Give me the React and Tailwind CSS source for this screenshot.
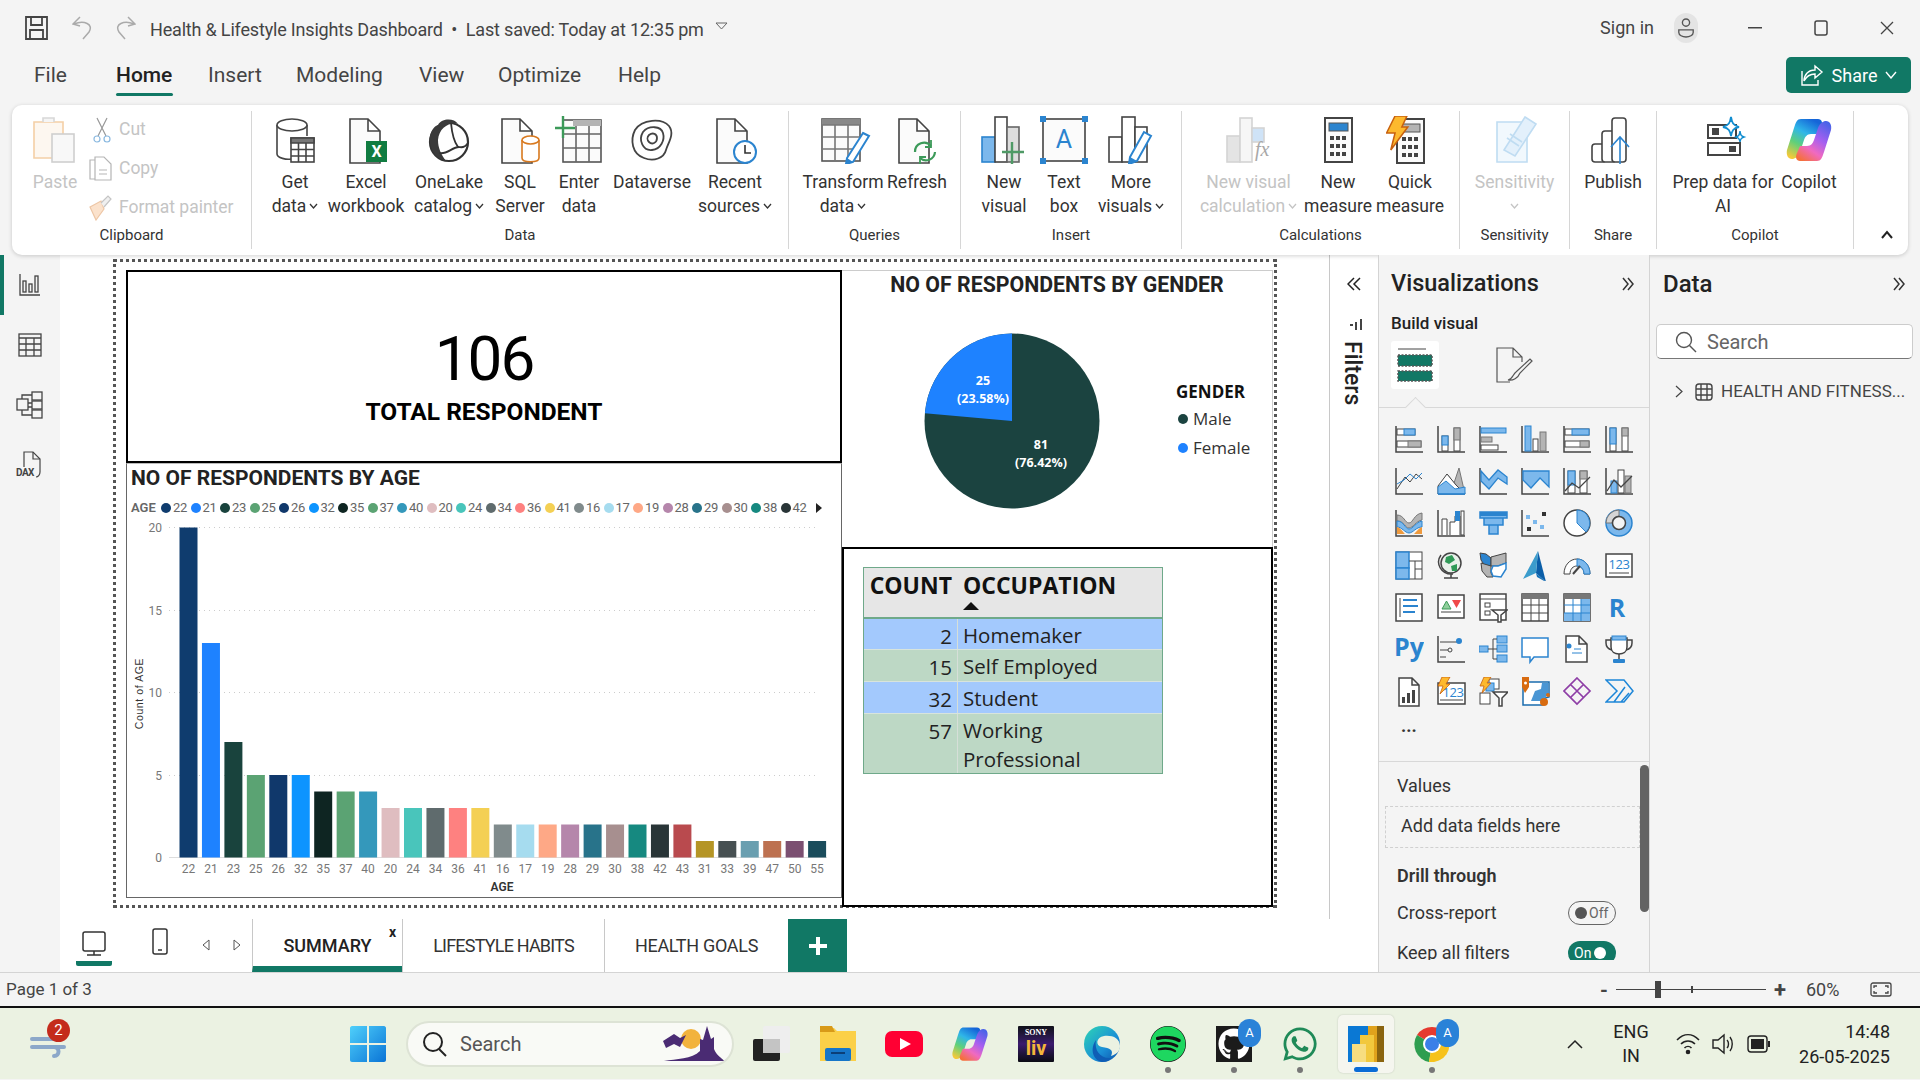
import { FaGithub, FaWhatsapp, FaSpotify } from 'react-icons/fa';

const D = '#444444';
const B = '#2b84cf';
const L = '#7cb8ec';
const G = '#b4b4b4';

const bars = [
  ['22', 20, '#0f3c6e'], ['21', 13, '#1e82ff'], ['23', 7, '#19433d'], ['25', 5, '#5ba373'], ['26', 5, '#10386b'],
  ['32', 5, '#0d94ff'], ['35', 4, '#0e2522'], ['37', 4, '#5ba373'], ['40', 4, '#3498bb'], ['20', 3, '#dfbdc0'],
  ['24', 3, '#49c5bb'], ['34', 3, '#5f6b6d'], ['36', 3, '#fe8180'], ['41', 3, '#f4d054'], ['16', 2, '#808b8c'],
  ['17', 2, '#a6dcef'], ['19', 2, '#fea886'], ['28', 2, '#b586ab'], ['29', 2, '#28738a'], ['30', 2, '#a78f8f'],
  ['38', 2, '#168980'], ['42', 2, '#293537'], ['43', 2, '#b94a4e'], ['31', 1, '#b59525'], ['33', 1, '#475052'],
  ['39', 1, '#6a9fb0'], ['47', 1, '#bd7150'], ['50', 1, '#7b4f71'], ['55', 1, '#1b4d5c'],
];

// ribbon icons are all drawn on a 48 box
function RI({ children, w = 48, h = 48 }) {
  return (
    <svg width={w} height={h} viewBox={`0 0 ${w} ${h}`} fill="none" stroke={D} strokeWidth="1.6">
      {children}
    </svg>
  );
}

const Doc = ({ x = 8, w = 28, h = 44, c = D }) => (
  <path d={`M${x} 3H${x + w - 12}L${x + w} 15V${3 + h}H${x}Z M${x + w - 12} 3V15H${x + w}`} stroke={c} fill="#fbfbfb" />
);

const PasteIcon = () => (
  <RI>
    <path d="M3 6H32V42H3Z" stroke="#f4cfa6" fill="#fdf7f0" />
    <path d="M12 6V2H23V6" stroke="#d8d8d8" fill="#f5f5f5" />
    <rect x="21" y="18" width="22" height="28" stroke="#cfcfcf" fill="#f8f8f8" />
  </RI>
);
const GetDataIcon = () => (
  <RI>
    <path d="M6 9V38C6 42 16 44 20 43M36 9V20" />
    <ellipse cx="21" cy="9" rx="15" ry="6" fill="#fff" />
    <rect x="20" y="22" width="23" height="24" fill="#fff" />
    <path d="M20 27H43V22H20Z" fill="#777" />
    <path d="M20 33.5H43M20 40H43M27.5 27V46M35 27V46" />
  </RI>
);
const ExcelIcon = () => (
  <RI>
    <Doc x={8} w={30} />
    <rect x="24" y="25" width="21" height="21" fill="#107c41" stroke="none" />
    <text x="34.5" y="41" textAnchor="middle" fill="#fff" stroke="none" fontSize="16" fontWeight="700">X</text>
  </RI>
);
const OneLakeIcon = () => (
  <RI>
    <circle cx="24" cy="26" r="19" fill="#fff" strokeWidth="2.2" stroke="#333" />
    <path d="M6 31C2 18 9 10 13 9C17 2 29 2 33 8C24 6 14 12 13 24C13 32 16 38 21 45C13 43 8 38 6 31Z" fill="#3a3a3a" stroke="none" />
    <path d="M26 7C27 18 30 27 33 31M14 37C22 39 27 31 34 31C38 32 41 30 43 27" stroke="#333" strokeWidth="1.800" />
  </RI>
);
const SqlIcon = () => (
  <RI>
    <Doc x={6} w={30} />
    <path d="M26 24V42C26 47 43 47 43 42V24" stroke="#d8791f" fill="#fff" />
    <ellipse cx="34.5" cy="24" rx="8.5" ry="4" stroke="#d8791f" fill="#fff" />
  </RI>
);
const EnterIcon = () => (
  <RI>
    <rect x="8" y="4" width="38" height="42" fill="#fbfbfb" stroke="#555" />
    <rect x="18" y="4" width="28" height="6" fill={G} stroke="none" />
    <path d="M8 18H46M8 32H46M21 10V46M34 10V46" stroke="#666" />
    <path d="M8 0V22M0 12H20" stroke="#3c9a59" strokeWidth="2.4" />
  </RI>
);
const DataverseIcon = () => (
  <RI>
    <path d="M7 14C14 3 34 2 41 10C47 18 40 27 38 34C36 42 26 46 16 42C4 38 2 24 7 14Z" fill="#fff" strokeWidth="1.8" />
    <path d="M15 16C21 9 33 10 35 17C37 24 33 33 24 34C15 35 10 24 15 16Z" strokeWidth="1.8" />
    <path d="M21 19C25 16 29 18 29 22C29 27 24 29 21 26C19 24 19 21 21 19Z" strokeWidth="1.8" />
  </RI>
);
const RecentIcon = () => (
  <RI>
    <Doc x={6} w={30} />
    <circle cx="34" cy="36" r="11" fill="#fff" stroke={B} strokeWidth="2" />
    <path d="M34 29V37H40" stroke="#333" />
  </RI>
);
const TransformIcon = () => (
  <RI w={62} h={48}>
    <g transform="translate(10 0)">
      <rect x="0" y="3" width="38" height="42" fill="#fbfbfb" stroke="#555" />
      <rect x="0" y="3" width="38" height="6" fill="#888" stroke="none" />
      <path d="M0 9H38M0 21H38M0 33H38M13 9V45M26 9V45" stroke="#777" />
      <path d="M41 17L47 20L31 46L24 48L25 42Z" fill="#fff" stroke={B} strokeWidth="2" />
      <path d="M25 42L31 46L24 48Z" fill={B} stroke="none" />
    </g>
  </RI>
);
const RefreshIcon = () => (
  <RI>
    <Doc x={6} w={30} />
    <path d="M22 36A9 9 0 0 1 38 30M42 36A9 9 0 0 1 27 42" stroke="#3c9a59" strokeWidth="2.2" fill="none" />
    <path d="M38 24V31H32M27 48V41H33" stroke="#3c9a59" strokeWidth="1.8" />
  </RI>
);
const NewVisualIcon = () => (
  <RI>
    <rect x="2" y="21" width="13" height="25" fill={L} stroke={B} />
    <rect x="15" y="1" width="12" height="45" fill="#fff" />
    <rect x="27" y="11" width="12" height="35" fill="#ddd" stroke="#666" />
    <path d="M32 26V48M22 36H44" stroke="#4f9a66" strokeWidth="2.4" />
  </RI>
);
const TextBoxIcon = () => (
  <RI>
    <rect x="3" y="3" width="42" height="42" fill="#fbfbfb" stroke="#444" />
    <text x="24" y="32" textAnchor="middle" fontSize="25" stroke="none" fill={B}>A</text>
    <g fill={B} stroke="none">
      <rect x="0" y="0" width="6" height="6" />
      <rect x="42" y="0" width="6" height="6" />
      <rect x="0" y="42" width="6" height="6" />
      <rect x="42" y="42" width="6" height="6" />
    </g>
  </RI>
);
const MoreVisualsIcon = () => (
  <RI>
    <rect x="2" y="21" width="13" height="25" fill="#fff" />
    <rect x="15" y="1" width="13" height="45" fill="#fff" />
    <rect x="28" y="11" width="12" height="35" fill="#fff" />
    <path d="M37 16L44 20L30 45L22 48L23 41Z" fill="#fff" stroke={B} strokeWidth="2" />
    <path d="M23 41L30 45L22 48Z" fill={B} stroke="none" />
  </RI>
);
const NewCalcIcon = () => (
  <RI>
    <rect x="2" y="20" width="13" height="26" fill="#e4e4e4" stroke="#d4d4d4" />
    <rect x="15" y="2" width="12" height="44" fill="#f6f6f6" stroke="#d4d4d4" />
    <rect x="27" y="12" width="12" height="14" fill="#cfe3f7" stroke="#d4d4d4" />
    <text x="30" y="40" fontSize="20" fontStyle="italic" fontFamily="Liberation Serif" stroke="none" fill="#a8a8a8">fx</text>
  </RI>
);
const Calc = ({ c = B }) => (
  <g>
    <rect x="11" y="2" width="27" height="44" fill="#fbfbfb" strokeWidth="2" stroke="#444" />
    <rect x="15" y="7" width="19" height="8" fill={c} stroke="#555" strokeWidth="1" />
    <g fill="#444" stroke="none">
      {[20, 28, 36].map((y) => [16, 22, 28].map((x) => <rect key={`${x}${y}`} x={x} y={y} width="4" height="4" />))}
    </g>
  </g>
);
const QuickIcon = () => (
  <RI>
    <g transform="translate(0 1)"><Calc c={G} /></g>
    <path d="M13 0H27L21 13H28L8 40L13 20H3Z" fill="#fdb92e" stroke="#c8610f" strokeWidth="1.8" transform="translate(-2 0) scale(.85)" />
  </RI>
);
const SensitivityIcon = () => (
  <RI>
    <path d="M6 6H36V46H6Z" stroke="#bfdcf2" fill="#f1f8fd" />
    <path d="M34 1L45 8L24 40L13 34Z" stroke="#bfdcf2" fill="#e3f0fb" />
    <path d="M16 22L28 30M19 18L31 26" stroke="#bfdcf2" />
  </RI>
);
const PublishIcon = () => (
  <RI>
    <rect x="3" y="28" width="14" height="18" rx="3" fill="#fff" />
    <rect x="13" y="15" width="14" height="31" rx="3" fill="#fff" />
    <rect x="23" y="2" width="14" height="44" rx="3" fill="#fff" />
    <path d="M31 48V22M22 31L31 21L40 31" stroke={B} strokeWidth="1.6" />
  </RI>
);
const PrepIcon = () => (
  <RI>
    <rect x="9" y="9" width="28" height="13" fill="#fff" stroke="#444" strokeWidth="2" />
    <rect x="13" y="12" width="7" height="7" fill="#444" stroke="none" />
    <rect x="9" y="27" width="32" height="12" fill="#fff" stroke="#444" strokeWidth="2" />
    <rect x="30" y="30" width="7" height="6" fill="#444" stroke="none" />
    <path d="M32 1C33 7 34 9 40 11C34 12 33 15 32 20C31 15 30 12 24 11C30 9 31 7 32 1Z" fill="#fff" stroke="#118dd0" strokeWidth="1.800" />
    <path d="M41 15C41.500 19 42 20 45 21C42 22 41.500 23 41 26C40.500 23 40 22 37 21C40 20 40.500 19 41 15Z" fill="#fff" stroke="#118dd0" strokeWidth="1.500" />
  </RI>
);
const CopilotLogo = ({ id, size = 48 }) => (
  <svg width={size} height={size} viewBox="0 0 48 48">
    <defs>
      <linearGradient id={`${id}a`} x1=".7" y1="0" x2=".2" y2="1">
        <stop offset="0" stopColor="#1565d8" />
        <stop offset=".35" stopColor="#2fb6e8" />
        <stop offset=".65" stopColor="#5fd07a" />
        <stop offset="1" stopColor="#f5c93a" />
      </linearGradient>
      <linearGradient id={`${id}b`} x1=".8" y1="0" x2=".2" y2="1">
        <stop offset="0" stopColor="#4a63e8" />
        <stop offset=".4" stopColor="#a65ff0" />
        <stop offset=".7" stopColor="#f06ac0" />
        <stop offset="1" stopColor="#f5703c" />
      </linearGradient>
    </defs>
    <path d="M16 3H33C37 3 38 7 36 11L33 18H26C22 18 20 21 19 24L15 36C13 41 10 43 7 43C3 43 1 39 2 34L9 12C11 6 12 3 16 3Z" fill={`url(#${id}a)`} />
    <path d="M32 45H15C11 45 10 41 12 37L15 30H22C26 30 28 27 29 24L33 12C35 7 38 5 41 5C45 5 47 9 46 14L39 36C37 42 36 45 32 45Z" fill={`url(#${id}b)`} />
  </svg>
);

function RibbonBtn({ icon, lines, w, caret, disabled }) {
  const c = disabled ? 'text-[#c4c4c4]' : 'text-[#333]';
  return (
    <div className={`flex flex-col items-center shrink-0 ${c}`} style={{ width: w }}>
      <div className="h-[58px] flex items-center justify-center">{icon}</div>
      <div className="whitespace-nowrap text-[17.5px] leading-[24px] mt-[1px]">{lines[0]}</div>
      <div className="whitespace-nowrap text-[17.5px] leading-[24px] flex items-center gap-[3px] h-[24px]">
        {lines[1]}
        {caret && (
          <svg width="9" height="6" viewBox="0 0 9 6" fill="none" stroke="currentColor" strokeWidth="1.3"><path d="M1 1L4.500 5L8 1" /></svg>
        )}
      </div>
    </div>
  );
}

function RibbonGroup({ label, w, children, last }) {
  return (
    <div className={`flex flex-col h-[138px] shrink-0 ${last ? '' : 'border-r border-[#d6d6d6]'}`} style={{ width: w }}>
      <div className="flex-1 flex justify-center">{children}</div>
      <div className="h-[24px] text-center text-[15px] text-[#333] leading-[20px]">{label}</div>
    </div>
  );
}

function Ribbon() {
  return (
    <div className="mx-[12px] w-[1896px] h-[150px] bg-white rounded-[10px] shadow-[0_1px_4px_rgba(0,0,0,0.18)] flex items-start pt-[6px] relative shrink-0">
      <RibbonGroup label="Clipboard" w={240}>
        <div className="flex w-full pl-[14px]">
          <RibbonBtn w={58} icon={<PasteIcon />} lines={['Paste', '']} disabled />
          <div className="flex flex-col text-[17.5px] text-[#c4c4c4] ml-[5px] gap-[14px]">
            <div className="flex items-center h-[25px] mt-[6px]">
              <span className="w-[30px] pl-[4px] flex">
                <svg width="18" height="26" viewBox="0 0 18 26" fill="none" stroke="#999" strokeWidth="1.200"><path d="M4 1L13 19M14 1L5 19" /><circle cx="4" cy="22" r="3" stroke="#8ab9e0" /><circle cx="14" cy="22" r="3" stroke="#8ab9e0" /></svg>
              </span>
              Cut
            </div>
            <div className="flex items-center h-[25px]">
              <span className="w-[30px] flex">
                <svg width="24" height="26" viewBox="0 0 24 26" fill="none" stroke="#b5b5b5" strokeWidth="1.200"><path d="M1 4H10V23H1Z" /><path d="M6 1H15L22 8V24H6Z" fill="#fff" /><path d="M10 14H18M10 18H18" /></svg>
              </span>
              Copy
            </div>
            <div className="flex items-center h-[25px]">
              <span className="w-[30px] flex">
                <svg width="24" height="26" viewBox="0 0 24 26" fill="none" stroke="#c5c5c5" strokeWidth="1.200"><path d="M1 12L12 6L15 14L7 25Z" fill="#fbe2cc" stroke="#edc6a5" /><path d="M12 8L19 1L22 4L15 12" fill="#f0f0f0" /></svg>
              </span>
              Format painter
            </div>
          </div>
        </div>
      </RibbonGroup>
      <RibbonGroup label="Data" w={537}>
        <div className="flex w-full pl-[10px]">
          <RibbonBtn w={66} icon={<GetDataIcon />} lines={['Get', 'data']} caret />
          <RibbonBtn w={76} icon={<ExcelIcon />} lines={['Excel', 'workbook']} />
          <RibbonBtn w={90} icon={<OneLakeIcon />} lines={['OneLake', 'catalog']} caret />
          <RibbonBtn w={52} icon={<SqlIcon />} lines={['SQL', 'Server']} />
          <RibbonBtn w={66} icon={<EnterIcon />} lines={['Enter', 'data']} />
          <RibbonBtn w={80} icon={<DataverseIcon />} lines={['Dataverse', '']} />
          <RibbonBtn w={86} icon={<RecentIcon />} lines={['Recent', 'sources']} caret />
        </div>
      </RibbonGroup>
      <RibbonGroup label="Queries" w={172}>
        <div className="flex w-full pl-[14px]">
          <RibbonBtn w={80} icon={<TransformIcon />} lines={['Transform', 'data']} caret />
          <RibbonBtn w={68} icon={<RefreshIcon />} lines={['Refresh', '']} />
        </div>
      </RibbonGroup>
      <RibbonGroup label="Insert" w={221}>
        <div className="flex w-full pl-[13px]">
          <RibbonBtn w={60} icon={<NewVisualIcon />} lines={['New', 'visual']} />
          <RibbonBtn w={60} icon={<TextBoxIcon />} lines={['Text', 'box']} />
          <RibbonBtn w={74} icon={<MoreVisualsIcon />} lines={['More', 'visuals']} caret />
        </div>
      </RibbonGroup>
      <RibbonGroup label="Calculations" w={278}>
        <div className="flex w-full pl-[13px]">
          <RibbonBtn w={107} icon={<NewCalcIcon />} lines={['New visual', 'calculation']} caret disabled />
          <RibbonBtn w={72} icon={<RI><Calc /></RI>} lines={['New', 'measure']} />
          <RibbonBtn w={72} icon={<QuickIcon />} lines={['Quick', 'measure']} />
        </div>
      </RibbonGroup>
      <RibbonGroup label="Sensitivity" w={110}>
        <RibbonBtn w={100} icon={<SensitivityIcon />} lines={['Sensitivity', '']} caret disabled />
      </RibbonGroup>
      <RibbonGroup label="Share" w={87}>
        <RibbonBtn w={80} icon={<PublishIcon />} lines={['Publish', '']} />
      </RibbonGroup>
      <RibbonGroup label="Copilot" w={197}>
        <div className="flex w-full pl-[12px]">
          <RibbonBtn w={108} icon={<PrepIcon />} lines={['Prep data for', 'AI']} />
          <RibbonBtn w={64} icon={<CopilotLogo id="rc" />} lines={['Copilot', '']} />
        </div>
      </RibbonGroup>
      <svg className="absolute right-[14px] bottom-[16px]" width="14" height="9" viewBox="0 0 14 9" fill="none" stroke="#222" strokeWidth="2"><path d="M2 8L7 2L12 8" /></svg>
    </div>
  );
}

function TitleBar() {
  return (
    <div className="h-[55px] flex items-center shrink-0 text-[#444]">
      <svg className="ml-[25px]" width="23" height="24" viewBox="0 0 23 24" fill="none" stroke="#444" strokeWidth="1.800"><path d="M1 1H22V23H1Z" /><path d="M6 1V9H17V1M5 23V14H18V23" /></svg>
      <svg className="ml-[24px]" width="22" height="24" viewBox="0 0 22 24" fill="none" stroke="#aaa" strokeWidth="1.500"><path d="M8 1L1 8L8 10M2 8C12 4 22 8 17 16L11 23" /></svg>
      <svg className="ml-[20px]" width="22" height="24" viewBox="0 0 22 24" fill="none" stroke="#aaa" strokeWidth="1.500"><path d="M14 1L21 8L14 10M20 8C10 4 0 8 5 16L11 23" /></svg>
      <div className="ml-[14px] text-[18px] tracking-[-0.18px] whitespace-nowrap w-[554px] pt-[3px]">Health &amp; Lifestyle Insights Dashboard&nbsp; •&nbsp; Last saved: Today at 12:35 pm</div>
      <svg className="ml-[11px] mb-[4px]" width="13" height="8" viewBox="0 0 13 8" fill="none" stroke="#666"><path d="M1 1H12L6.500 7Z" /></svg>
      <div className="ml-auto text-[18px]">Sign in</div>
      <div className="ml-[20px] w-[24px] h-[30px] rounded-full bg-[#e4e4e4] flex items-center justify-center">
        <svg width="18" height="24" viewBox="0 0 20 24" fill="none" stroke="#555" strokeWidth="1.500"><circle cx="10" cy="6" r="4" /><path d="M2 14H18V17C18 20 14 22 10 22C6 22 2 20 2 17Z" /></svg>
      </div>
      <svg className="ml-[50px]" width="14" height="2" viewBox="0 0 14 2"><rect width="14" height="1.500" fill="#444" /></svg>
      <svg className="ml-[52px]" width="14" height="16" viewBox="0 0 14 16" fill="none" stroke="#444" strokeWidth="1.500"><rect x="1" y="1" width="12" height="14" rx="2" /></svg>
      <svg className="ml-[52px] mr-[26px]" width="14" height="14" viewBox="0 0 14 14" fill="none" stroke="#444" strokeWidth="1.300"><path d="M1 1L13 13M13 1L1 13" /></svg>
    </div>
  );
}

function MenuRow() {
  return (
    <div className="h-[50px] flex items-start shrink-0 text-[21px] text-[#444]">
      <div className="ml-[34px] w-[82px] leading-[40px]">File</div>
      <div className="w-[92px] relative font-medium text-[#222] leading-[40px]">
        Home
        <div className="absolute left-0 top-[38px] w-[57px] h-[3px] bg-[#117865] rounded-full" />
      </div>
      <div className="w-[88px] leading-[40px]">Insert</div>
      <div className="w-[123px] leading-[40px]">Modeling</div>
      <div className="w-[79px] leading-[40px]">View</div>
      <div className="w-[120px] leading-[40px]">Optimize</div>
      <div className="leading-[40px]">Help</div>
      <div className="ml-auto mr-[9px] w-[125px] h-[36px] mt-[2px] rounded-[5px] bg-[#117865] text-white text-[18px] flex items-center justify-center gap-[8px]">
        <svg width="24" height="24" viewBox="0 0 24 24" fill="none" stroke="#fff" strokeWidth="1.400"><path d="M15 3L22 9L15 15V11C9 11 6 14 4 18C4 12 8 7 15 7Z" /><path d="M2 8V22H18V17" /></svg>
        Share
        <svg width="12" height="8" viewBox="0 0 12 8" fill="none" stroke="#fff" strokeWidth="1.400"><path d="M1 1L6 7L11 1" /></svg>
      </div>
    </div>
  );
}

function Rail() {
  return (
    <div className="w-[60px] shrink-0 bg-[#f4f4f4] flex flex-col">
      <div className="h-[60px] flex items-center justify-center relative">
        <div className="absolute left-0 top-0 w-[4px] h-[60px] bg-[#117865]" />
        <svg width="22" height="22" viewBox="0 0 22 22" fill="none" stroke="#444" strokeWidth="1.300"><path d="M1 0V21H21" /><rect x="4" y="7" width="3" height="11" /><rect x="10" y="10" width="3" height="8" /><rect x="16" y="2" width="3" height="16" /></svg>
      </div>
      <div className="h-[60px] flex items-center justify-center">
        <svg width="24" height="24" viewBox="0 0 24 24" fill="none" stroke="#444" strokeWidth="1.300"><rect x="1" y="1" width="22" height="22" /><path d="M1 5H23M1 11H23M1 17H23M8 5V23M16 5V23" /></svg>
      </div>
      <div className="h-[60px] flex items-center justify-center">
        <svg width="28" height="28" viewBox="0 0 28 28" fill="none" stroke="#444" strokeWidth="1.300"><rect x="1" y="8" width="11" height="11" /><rect x="16" y="1" width="10" height="8" /><rect x="16" y="10" width="10" height="8" /><rect x="16" y="19" width="10" height="8" /><path d="M12 12H16M12 16H16M6 8V4H16M6 19V24H16" /></svg>
      </div>
      <div className="h-[60px] flex items-center justify-center">
        <div className="relative w-[28px] h-[28px]">
          <svg width="28" height="28" viewBox="0 0 28 28" fill="none" stroke="#444" strokeWidth="1.200"><path d="M8 16V1H17L24 8V21C24 24 22 26 20 26" /><path d="M17 1V8H24" /></svg>
          <span className="absolute left-0 bottom-[0px] text-[10px] font-bold leading-[12px] text-[#444] tracking-[-0.5px]">DAX</span>
        </div>
      </div>
    </div>
  );
}

function AgeChart() {
  const ys = [[20, 65], [15, 148], [10, 230], [5, 313], [0, 395]];
  return (
    <div className="h-[435px] w-[716px] border-[1.5px] border-[#666] border-t-[#bbb] bg-white">
      <div className="pl-[4px] text-[21px] font-bold text-[#222] leading-[28px] whitespace-nowrap">NO OF RESPONDENTS BY AGE</div>
      <div className="pl-[4px] mt-[2px] h-[28px] flex items-center text-[13px] text-[#666]">
        <span className="w-[30px] font-semibold">AGE</span>
        {bars.slice(0, 22).map((b, i) => (
          <span key={i} className="w-[29.5px] flex items-center gap-[2px] shrink-0 tracking-[-0.3px]">
            <span className="w-[10px] h-[10px] rounded-full shrink-0" style={{ background: b[2] }} />
            {b[0]}
          </span>
        ))}
        <svg className="ml-[6px]" width="6" height="10" viewBox="0 0 6 10"><path d="M0 0L6 5L0 10Z" fill="#222" /></svg>
      </div>
      <svg width="713" height="372" viewBox="0 59.500 713 372" className="block">
        {ys.map(([v, y]) => (
          <g key={v}>
            <text x="35" y={y + 4} textAnchor="end" fontSize="12" fill="#777">{v}</text>
            {v > 0 && <line x1="42" x2="690" y1={y} y2={y} stroke="#ccc" strokeDasharray="1 4" />}
          </g>
        ))}
        <line x1="42" x2="700" y1="395" y2="395" stroke="#ddd" />
        {bars.map(([age, n, c], i) => {
          const x = 52.5 + i * 22.45;
          const h = n * 16.5;
          return (
            <g key={age}>
              <rect x={x} y={395 - h} width="18" height={h} fill={c} />
              <text x={x + 9} y="410" textAnchor="middle" fontSize="12" fill="#777">{age}</text>
            </g>
          );
        })}
        <text x="375" y="428" textAnchor="middle" fontSize="12" fontWeight="600" fill="#333">AGE</text>
        <text transform="translate(16 231) rotate(-90)" textAnchor="middle" fontSize="10.500" letterSpacing=".6" fontFamily="Liberation Sans" fill="#333">Count of AGE</text>
      </svg>
    </div>
  );
}

function GenderVisual() {
  return (
    <div className="h-[277px] w-[431px] border-t border-r border-[#ccc] bg-white">
      <div className="text-center text-[21.3px] font-bold text-[#222] leading-[28px] whitespace-nowrap">NO OF RESPONDENTS BY GENDER</div>
      <div className="flex mt-[34px]">
        <svg className="ml-[82px]" width="176" height="176" viewBox="0 0 176 176">
          <circle cx="88" cy="88" r="87.500" fill="#1b4340" />
          <path d="M88 88V0.500A87.500 87.500 0 0 0 0.900 80.200Z" fill="#1e82ff" />
          <g fill="#fff" fontSize="12.500" fontWeight="700" textAnchor="middle" fontFamily="Open Sans">
            <text x="59" y="52">25</text>
            <text x="59" y="70">(23.58%)</text>
            <text x="117" y="116">81</text>
            <text x="117" y="134">(76.42%)</text>
          </g>
        </svg>
        <div className="ml-[76px] mt-[47px] font-['Open_Sans',sans-serif]">
          <div className="text-[17px] font-bold text-[#111] leading-[24px]">GENDER</div>
          <div className="flex items-center gap-[5px] text-[17px] text-[#333] leading-[29px] pl-[2px]"><span className="w-[10px] h-[10px] rounded-full bg-[#1b4340]" />Male</div>
          <div className="flex items-center gap-[5px] text-[17px] text-[#333] leading-[29px] pl-[2px]"><span className="w-[10px] h-[10px] rounded-full bg-[#1e82ff]" />Female</div>
        </div>
      </div>
    </div>
  );
}

function OccupationTable() {
  const rows = [
    ['2', 'Homemaker', 'bg-[#a3c9fd]', 'h-[31px]'],
    ['15', 'Self Employed', 'bg-[#bdd8c5]', 'h-[32px]'],
    ['32', 'Student', 'bg-[#a3c9fd]', 'h-[32px]'],
    ['57', 'Working Professional', 'bg-[#bdd8c5]', 'h-[59px]'],
  ];
  return (
    <div className="h-[360px] w-[431px] border-2 border-black bg-white pt-[18px] pl-[19px] font-['Open_Sans',sans-serif]">
      <div className="w-[300px] border border-[#6fa98a] text-[20.5px] text-[#222]">
        <div className="flex h-[51px] bg-[#e6e6e6] border-b-2 border-[#6fa98a] font-bold text-[#111] text-[23px]">
          <div className="w-[94px] pr-[6px] text-right leading-[34px] whitespace-nowrap">COUNT</div>
          <div className="flex-1 pl-[5px] leading-[34px] relative">
            OCCUPATION
            <svg className="absolute left-[5px] top-[34px]" width="16" height="8" viewBox="0 0 16 8"><path d="M0 8L8 0L16 8Z" fill="#111" /></svg>
          </div>
        </div>
        {rows.map(([n, name, bg, h]) => (
          <div key={n} className={`flex ${bg} ${h} border-b border-[#d8e4dc] last:border-b-0`}>
            <div className="w-[94px] pr-[5px] text-right leading-[30px] pt-[2px] border-r border-[#d6dfd8]">{n}</div>
            <div className="flex-1 pl-[5px] leading-[29px] pt-[2px]"><div className="w-[170px]">{name}</div></div>
          </div>
        ))}
      </div>
    </div>
  );
}

function Canvas() {
  return (
    <div className="flex-1 bg-white pl-[53px] pt-[4px]">
      <div className="w-[1164px] h-[649px] border-[3px] border-dotted border-[#555] pl-[10px] pt-[8px] flex">
        <div className="w-[716px]">
          <div className="h-[193px] border-2 border-black flex flex-col items-center">
            <div className="mt-[52px] text-[62px] leading-[70px] tracking-[-2px] text-black">106</div>
            <div className="mt-[2px] text-[24.5px] font-bold leading-[32px] text-black">TOTAL RESPONDENT</div>
          </div>
          <AgeChart />
        </div>
        <div>
          <GenderVisual />
          <OccupationTable />
        </div>
      </div>
    </div>
  );
}

function FiltersPane() {
  return (
    <div className="w-[49px] bg-white border-l border-[#c8c8c8] flex flex-col items-center pt-[22px] shrink-0">
      <svg width="14" height="14" viewBox="0 0 14 14" fill="none" stroke="#222" strokeWidth="1.500"><path d="M7 1L1 7L7 13M13 1L7 7L13 13" /></svg>
      <svg className="mt-[28px] ml-[4px]" width="12" height="12" viewBox="0 0 12 12" fill="#444"><rect x="0" y="5" width="3" height="2" /><rect x="5" y="3" width="2" height="8" /><rect x="10" y="0" width="2" height="11" /></svg>
      <div className="mt-[10px] mr-[4px] [writing-mode:vertical-rl] text-[23px] font-medium text-[#222] leading-[26px]">Filters</div>
    </div>
  );
}

function TabsBar() {
  return (
    <div className="h-[53px] bg-white flex shrink-0 relative">
      <div className="ml-[16px] w-[36px] h-[47px] flex flex-col items-center pt-[12px] border-b-[5px] border-[#117865] rounded-b-[2px]">
        <svg width="24" height="26" viewBox="0 0 24 26" fill="none" stroke="#333" strokeWidth="1.500"><rect x="1" y="1" width="22" height="19" rx="2" /><path d="M12 20V24M5 24H19" /></svg>
      </div>
      <div className="ml-[40px] pt-[9px]">
        <svg width="16" height="27" viewBox="0 0 16 27" fill="none" stroke="#333" strokeWidth="1.500"><rect x="1" y="1" width="14" height="25" rx="2" /><path d="M6 22H10" /></svg>
      </div>
      <div className="ml-[34px] pt-[20px]">
        <svg width="8" height="12" viewBox="0 0 8 12" fill="none" stroke="#555"><path d="M7 1L1 6L7 11Z" /></svg>
      </div>
      <div className="ml-[23px] pt-[20px]">
        <svg width="8" height="12" viewBox="0 0 8 12" fill="none" stroke="#555"><path d="M1 1L7 6L1 11Z" /></svg>
      </div>
      <div className="ml-[11px] w-[150px] border-l border-[#c8c8c8] border-b-[6px] border-b-[#117865] flex items-center justify-center text-[18px] font-medium text-[#222] relative pt-[5px]">
        SUMMARY
        <span className="absolute right-[6px] top-[5px] text-[14px] font-bold leading-[16px]">x</span>
      </div>
      <div className="w-[202px] border-l border-[#c8c8c8] flex items-center justify-center text-[18px] tracking-[-0.8px] text-[#333]">LIFESTYLE HABITS</div>
      <div className="w-[184px] border-l border-[#c8c8c8] flex items-center justify-center text-[18px] tracking-[-0.3px] text-[#333]">HEALTH GOALS</div>
      <div className="w-[59px] bg-[#117865] flex items-center justify-center">
        <svg width="18" height="18" viewBox="0 0 18 18" stroke="#fff" strokeWidth="4"><path d="M9 0V18M0 9H18" /></svg>
      </div>
    </div>
  );
}

// axes shared by most of the visual type icons
const Ax = () => <path d="M1 1V27H28" stroke={D} strokeWidth="1.500" fill="none" />;

const vizIcons = [
  <><Ax /><rect x="2" y="4" width="18" height="6" fill="#fff" stroke={D} /><rect x="9" y="4" width="11" height="6" fill={L} stroke={B} /><rect x="2" y="16" width="24" height="6" fill="#fff" stroke={D} /><rect x="13" y="16" width="13" height="6" fill={G} stroke="#777" /></>,
  <><Ax /><rect x="5" y="11" width="6" height="15" fill="#fff" stroke={D} /><rect x="5" y="11" width="6" height="9" fill={L} stroke={B} /><rect x="17" y="3" width="6" height="23" fill="#fff" stroke={D} /><rect x="17" y="3" width="6" height="12" fill={G} stroke="#777" /></>,
  <><Ax /><rect x="2" y="3" width="25" height="5" fill={L} stroke={B} /><rect x="2" y="12" width="11" height="5" fill={G} stroke="#777" /><rect x="2" y="20" width="17" height="5" fill="#fff" stroke={D} /></>,
  <><Ax /><rect x="4" y="1" width="6" height="25" fill={L} stroke={B} /><rect x="12" y="14" width="5" height="12" fill="#fff" stroke={D} /><rect x="19" y="7" width="6" height="19" fill={G} stroke="#777" /></>,
  <><Ax /><rect x="2" y="4" width="24" height="6" fill="#fff" stroke={D} /><rect x="9" y="4" width="17" height="6" fill={L} stroke={B} /><rect x="2" y="16" width="24" height="6" fill="#fff" stroke={D} /><rect x="17" y="16" width="9" height="6" fill={G} stroke="#777" /></>,
  <><Ax /><rect x="5" y="3" width="6" height="23" fill="#fff" stroke={D} /><rect x="5" y="3" width="6" height="16" fill={L} stroke={B} /><rect x="17" y="3" width="6" height="23" fill="#fff" stroke={D} /><rect x="17" y="3" width="6" height="8" fill={G} stroke="#777" /></>,
  <><Ax /><path d="M2 22L10 10L15 15L21 7L27 12" stroke={D} fill="none" /><path d="M2 17L9 13L15 7L21 12L27 6" stroke={B} fill="none" /></>,
  <><path d="M1 27L10 7L17 16L22 1L28 27Z" fill={G} stroke="#777" /><path d="M1 27V19L10 7L19 18L28 27Z" fill="#fff" stroke={D} /><path d="M1 27V20L9 14L18 22L28 20V27Z" fill={L} stroke={B} /><path d="M1 27H28" stroke={B} strokeWidth="1.500" /></>,
  <><Ax /><path d="M2 4L10 13L19 3L28 10V17L19 11L10 22L2 14Z" fill={L} stroke={B} strokeWidth="1.300" /></>,
  <><Ax /><path d="M2 4H28V20L19 11L10 21L2 13Z" fill={L} stroke={B} strokeWidth="1.300" /></>,
  <><Ax /><rect x="5" y="4" width="7" height="22" fill="#fff" stroke={D} /><rect x="5" y="4" width="7" height="14" fill={L} stroke={B} /><rect x="17" y="4" width="7" height="22" fill="#fff" stroke={D} /><rect x="17" y="4" width="7" height="8" fill={G} stroke="#777" /><path d="M2 24L9 16L16 21L27 10" stroke={D} fill="none" strokeWidth="1.300" /></>,
  <><Ax /><rect x="6" y="14" width="6" height="12" fill={L} stroke={B} /><rect x="13" y="3" width="6" height="23" fill="#fff" stroke={D} /><rect x="20" y="9" width="6" height="17" fill={G} stroke="#777" /><path d="M2 24L9 13L16 20L27 9" stroke={D} fill="none" strokeWidth="1.300" /></>,
  <><Ax /><path d="M2 6C9 6 10 14 14 14C18 14 19 5 27 4V11C21 12 18 19 14 19C10 19 9 12 2 12Z" fill={G} stroke="#777" /><path d="M2 12C9 12 10 20 14 20C18 20 21 13 27 12V18C21 18 18 24 14 24C10 24 7 18 2 18Z" fill={L} stroke={B} /><path d="M2 18C6 19 8 23 10 25H2ZM27 18V25H19C22 22 24 19 27 18Z" fill="#ef9a3d" /></>,
  <><Ax /><path d="M5 26V10H10V26M13 26V13H18V7H23V26" stroke={D} fill="#fff" /><rect x="18" y="2" width="5" height="10" fill={B} /><rect x="24" y="2" width="3" height="24" fill="#fff" stroke={D} /></>,
  <><path d="M1 3H28V9H1Z M5 9H24V16H5Z M10 16H19V25H10Z" fill={L} stroke={B} strokeWidth="1.500" /><rect x="1" y="3" width="27" height="4" fill={B} /></>,
  <><Ax /><g fill={L}><rect x="5" y="6" width="4" height="4" /><rect x="12" y="11" width="4" height="4" /><rect x="19" y="16" width="4" height="4" /></g><g fill="#333"><rect x="21" y="3" width="4" height="4" /><rect x="6" y="18" width="4" height="4" /></g></>,
  <><circle cx="14" cy="14" r="13" fill="#fff" stroke={D} strokeWidth="1.500" /><path d="M14 1A13 13 0 0 1 23 23L14 14Z" fill={L} stroke={B} /></>,
  <><circle cx="14" cy="14" r="13" fill={L} stroke={B} strokeWidth="1.500" /><path d="M1 14A13 13 0 0 1 14 1V7A7 7 0 0 0 7 14Z" fill="#d5d5d5" stroke="#777" /><circle cx="14" cy="14" r="6.500" fill="#f4f4f4" stroke={D} strokeWidth="1.500" /></>,
  <><rect x="1" y="1" width="26" height="27" fill="#fff" stroke={D} /><rect x="1" y="1" width="13" height="16" fill={L} stroke={B} strokeWidth="1.500" /><rect x="1" y="17" width="13" height="11" fill={L} stroke={B} strokeWidth="1.500" /><path d="M14 10H27M20 10V28M20 18H27" stroke={D} /></>,
  <><circle cx="14" cy="12" r="10" fill="#e8f0ea" stroke={D} strokeWidth="1.500" /><path d="M9 6L15 4L18 9L12 13L8 11ZM14 15L20 13L20 20L15 20Z" fill="#2f9a57" /><path d="M4 4C-2 12 4 24 16 23M14 23V27M7 27H21" stroke={D} fill="none" strokeWidth="1.500" /></>,
  <><path d="M1 2L7 3L12 7V15L6 15L2 9Z" fill={B} stroke={D} /><path d="M12 6L27 2V12L19 15H12Z" fill={G} stroke={D} /><path d="M2 12L12 15V22L14 26L8 26L3 20Z" fill={G} stroke={D} /><path d="M14 15L19 15L27 12V18L22 26L14 25L12 20Z" fill="#fff" stroke={B} strokeWidth="1.500" /></>,
  <><path d="M17 0L25 31L15 22Z" fill="#0a5ea8" /><path d="M17 0L15 22L2 28Z" fill="#3b9ccc" /><path d="M15 22L25 31L16 26Z" fill="#1471b8" /></>,
  <><path d="M1 23C1 14 7 8 14 8C21 8 27 14 27 23H21C21 18 18 15 14 15C10 15 7 18 7 23Z" fill="#fff" stroke={D} /><path d="M14 8C21 8 27 14 27 23H21C21 18 18 15 14 15Z" fill={L} stroke={B} /><path d="M10 23L17 15" stroke={D} strokeWidth="2" /></>,
  <><rect x="1" y="3" width="26" height="23" fill="#fff" stroke={D} strokeWidth="1.500" /><path d="M4 22H24" stroke={D} /><text x="14" y="18" textAnchor="middle" fontSize="13" fill={B} letterSpacing="-.5">123</text></>,
  <><rect x="1" y="1" width="26" height="27" fill="#fff" stroke={D} strokeWidth="1.500" /><path d="M5 5V24" stroke={D} /><path d="M8 7H22M8 13H23M8 19H20" stroke={B} strokeWidth="2" /></>,
  <><rect x="1" y="2" width="26" height="23" fill="#fff" stroke={D} strokeWidth="1.500" /><path d="M4 19H24" stroke={D} /><path d="M5 16L9.500 8L14 16Z" fill="#8fce9b" stroke="#3d9b59" /><path d="M15 7H24L19.500 15Z" fill="#ef4a4a" /></>,
  <><rect x="1" y="1" width="26" height="26" fill="#fff" stroke={D} strokeWidth="1.500" /><path d="M1 6H27" stroke={D} /><rect x="6" y="10" width="5" height="4" stroke={D} fill="none" /><rect x="6" y="18" width="5" height="4" stroke={D} fill="none" /><path d="M13 17H28L22 22V29H19V22Z" fill="#fff" stroke={D} strokeWidth="1.500" /></>,
  <><rect x="1" y="1" width="26" height="27" fill="#fff" stroke={D} strokeWidth="1.500" /><rect x="1" y="1" width="26" height="5" fill="#777" /><path d="M1 12H27M1 20H27M10 6V28M18 6V28" stroke={D} /></>,
  <><rect x="1" y="1" width="26" height="27" fill="#fff" stroke={D} strokeWidth="1.500" /><rect x="1" y="1" width="26" height="5" fill="#777" /><rect x="1" y="20" width="26" height="8" fill={L} /><rect x="18" y="6" width="9" height="22" fill={L} /><path d="M1 12H27M1 20H27M10 6V28M18 6V28" stroke={B} /></>,
  <text x="12" y="24" textAnchor="middle" fontSize="25" fontWeight="700" fill={B}>R</text>,
  <text x="14" y="21" textAnchor="middle" fontSize="25" fontWeight="700" fill={B}>Py</text>,
  <><Ax /><path d="M3 7H20M3 15H11M3 22H9" stroke={D} /><circle cx="22" cy="6" r="3" fill={B} /><circle cx="13" cy="15" r="2" stroke={D} fill="none" /></>,
  <><rect x="0" y="11" width="9" height="6" fill={L} stroke={B} /><rect x="18" y="1" width="10" height="7" fill={L} stroke={B} /><rect x="18" y="10" width="10" height="7" fill={L} stroke={B} /><rect x="18" y="20" width="10" height="7" fill={L} stroke={B} /><path d="M9 14H18M14 4V24H18M14 4H18" stroke={D} fill="none" /></>,
  <path d="M1 3H27V22H13L9 27V22H1Z" fill="#fff" stroke={B} strokeWidth="1.500" />,
  <><path d="M3 1H16L24 9V27H3Z M16 1V9H24" fill="#fff" stroke={D} strokeWidth="1.500" /><circle cx="6" cy="11" r="2.500" fill={B} /><path d="M11 14H18M9 18H19" stroke={B} /></>,
  <><path d="M6 3H22V12C22 17 18 19 14 19C10 19 6 17 6 12Z" fill="#fff" stroke={D} strokeWidth="1.500" /><rect x="7" y="1" width="14" height="4" fill={L} stroke={B} /><path d="M6 5H1V8C1 12 3 14 7 15M22 5H27V8C27 12 25 14 21 15M14 19V24" stroke={D} fill="none" strokeWidth="1.500" /><rect x="8" y="24" width="12" height="4" rx="1" fill={B} /></>,
  <><path d="M4 1H17L24 8V29H4Z M17 1V8H24" fill="#fff" stroke={D} strokeWidth="1.500" /><rect x="7" y="20" width="3" height="6" fill={D} /><rect x="12" y="16" width="3" height="10" fill={D} /><rect x="17" y="13" width="3" height="13" fill={D} /></>,
  <><rect x="1" y="6" width="27" height="21" fill="#fff" stroke={D} strokeWidth="1.500" /><path d="M3 23H26" stroke={D} /><text x="16" y="20" textAnchor="middle" fontSize="13" fill={B} letterSpacing="-.5">123</text><path d="M5 0H13L9 7H13L3 17L6 9H1Z" fill="#fdb92e" stroke="#c8610f" strokeWidth=".8" /></>,
  <><rect x="10" y="2" width="10" height="10" fill="#fff" stroke={D} /><rect x="1" y="16" width="10" height="11" fill="#fff" stroke={D} /><rect x="7" y="6" width="8" height="8" fill={L} stroke={B} /><path d="M14 15H29L23 21V29H20V21Z" fill="#fff" stroke={D} strokeWidth="1.500" /><path d="M5 0H12L8 6H12L3 16L5 9H1Z" fill="#fdb92e" stroke="#c8610f" strokeWidth=".8" /></>,
  <><path d="M2 5H28V20L24 21L22 28H2Z" fill="#fff" stroke="#1a6cae" strokeWidth="1.500" /><path d="M10 24L14 14L20 12L21 6H27V18L20 24Z" fill="#4a96d4" /><path d="M1 0H8V10L4 16L1 10Z" fill="#d86b10" /><circle cx="4.500" cy="6" r="1.500" fill="#fff" /><circle cx="23" cy="25" r="4" fill="#d86b10" /><circle cx="27" cy="18" r="2" fill="#d86b10" /></>,
  <path d="M14 1L27 14L14 27L1 14ZM8 8L20 20M20 8L8 20" fill="none" stroke="#8e3ea6" strokeWidth="1.700" />,
  <path d="M1 3H19L28 14L19 25H1L12 14ZM9 25L20 10M16 25L24 16" fill="none" stroke="#1d86d8" strokeWidth="1.500" />,
];

function VizPane() {
  return (
    <div className="w-[272px] bg-[#f4f4f4] border-l border-r border-[#d4d4d4] shrink-0 flex flex-col relative overflow-hidden">
      <div className="flex items-center justify-between pl-[12px] pr-[15px] h-[52px] pt-[5px]">
        <span className="text-[23.5px] font-medium text-[#222]">Visualizations</span>
        <svg width="12" height="14" viewBox="0 0 12 14" fill="none" stroke="#333" strokeWidth="1.500"><path d="M1 1L6 7L1 13M6 1L11 7L6 13" /></svg>
      </div>
      <div className="pl-[12px] text-[17px] font-medium text-[#222] leading-[24px] h-[34px] pt-[4px]">Build visual</div>
      <div className="flex pl-[12px] h-[66px]">
        <div className="w-[48px] h-[48px] bg-white rounded-[3px] flex items-center justify-center">
          <svg width="36" height="36" viewBox="0 0 36 36"><path d="M1 2H29" stroke="#444" /><rect x="1" y="8" width="34" height="11" fill="#117865" stroke="#555" strokeWidth="1.500" strokeDasharray="2 1.500" /><rect x="1" y="24" width="34" height="10" fill="#117865" stroke="#555" strokeWidth="1.500" strokeDasharray="2 1.500" /></svg>
        </div>
        <svg className="ml-[57px] mt-[6px]" width="37" height="36" viewBox="0 0 37 36" fill="none" stroke="#555" strokeWidth="1.200"><path d="M14 35H1V1H17L26 10V15M17 1V10H26" /><path d="M36 14L24 26C22 31 17 34 12 33C17 32 17 27 20 25L34 12Z" /></svg>
      </div>
      <div className="border-t border-[#d8d8d8] h-[354px] relative">
        <div className="absolute left-[29px] top-[-8px] w-[15px] h-[15px] rotate-45 border-l border-t border-[#d8d8d8] bg-[#f4f4f4]" />
        <div className="grid grid-cols-[repeat(6,42px)] grid-rows-[repeat(7,42px)] pl-[9px] pt-[11px]">
          {vizIcons.map((ic, i) => (
            <div key={i} className="flex items-center justify-center">
              <svg width="29" height="30" viewBox="0 0 29 30" fontFamily="Open Sans">{ic}</svg>
            </div>
          ))}
        </div>
        <div className="pl-[22px] mt-[6px] text-[18px] font-bold leading-[14px] text-[#333]">...</div>
      </div>
      <div className="border-t border-[#d8d8d8] h-[199px] overflow-hidden relative pl-[18px] text-[18px] text-[#333]">
        <div className="mt-[12px] leading-[24px]">Values</div>
        <div className="ml-[-12px] mt-[8px] w-[255px] h-[42px] border border-dashed border-[#d0d0d0] pl-[15px] leading-[38px]">Add data fields here</div>
        <div className="mt-[16px] font-semibold leading-[24px]">Drill through</div>
        <div className="mt-[13px] flex items-center w-[219px] justify-between leading-[24px]">
          Cross-report
          <span className="w-[48px] h-[24px] rounded-full border border-[#666] flex items-center pl-[6px] gap-[2px] text-[14px] text-[#666]">
            <span className="w-[12px] h-[12px] rounded-full bg-[#555]" />Off
          </span>
        </div>
        <div className="mt-[16px] flex items-start w-[219px] justify-between leading-[24px] h-[24px]">
          Keep all filters
          <span className="w-[48px] h-[24px] rounded-full bg-[#117865] flex items-center pl-[6px] gap-[3px] text-[14px] text-white">
            On<span className="w-[12px] h-[12px] rounded-full bg-white" />
          </span>
        </div>
        <div className="absolute right-0 top-[3px] w-[9px] h-[147px] rounded-full bg-[#636363]" />
      </div>
    </div>
  );
}

function DataPane() {
  return (
    <div className="flex-1 bg-[#f4f4f4]">
      <div className="flex items-center justify-between pl-[13px] pr-[15px] h-[52px] pt-[5px]">
        <span className="text-[24px] font-medium text-[#222]">Data</span>
        <svg width="12" height="14" viewBox="0 0 12 14" fill="none" stroke="#333" strokeWidth="1.500"><path d="M1 1L6 7L1 13M6 1L11 7L6 13" /></svg>
      </div>
      <div className="ml-[6px] mt-[17px] w-[257px] h-[35px] bg-white rounded-[5px] border border-[#ccc] border-b-[#777] flex items-center pl-[18px] gap-[10px] text-[20px] text-[#666]">
        <svg width="22" height="22" viewBox="0 0 22 22" fill="none" stroke="#555" strokeWidth="1.400"><circle cx="9" cy="9" r="7.500" /><path d="M14.500 14.500L21 21" /></svg>
        Search
      </div>
      <div className="mt-[20px] pl-[25px] flex items-center text-[17px] text-[#444] whitespace-nowrap">
        <svg width="8" height="13" viewBox="0 0 8 13" fill="none" stroke="#444" strokeWidth="1.200"><path d="M1 1L7 6.500L1 12" /></svg>
        <svg className="ml-[12px]" width="18" height="18" viewBox="0 0 18 18" fill="none" stroke="#444" strokeWidth="1.400"><rect x="1" y="1" width="16" height="16" rx="3" /><path d="M1 6H17M1 12H17M6 1V17M12 1V17" /></svg>
        <span className="ml-[8px]">HEALTH AND FITNESS...</span>
      </div>
    </div>
  );
}

function StatusBar() {
  return (
    <div className="h-[36px] bg-[#f4f4f4] border-t border-[#d4d4d4] border-b-2 border-b-[#111] flex items-center shrink-0 text-[#444]">
      <span className="ml-[6px] text-[17px]">Page 1 of 3</span>
      <div className="ml-auto flex items-center">
        <span className="text-[20px] font-bold w-[10px] leading-[20px]">-</span>
        <div className="ml-[6px] w-[150px] h-[1.500px] bg-[#444] relative">
          <div className="absolute left-[39px] top-[-8px] w-[6px] h-[17px] bg-[#444]" />
          <div className="absolute left-[75px] top-[-3px] w-[2px] h-[7px] bg-[#444]" />
        </div>
        <span className="ml-[8px] text-[22px] font-bold leading-[20px]">+</span>
        <span className="ml-[20px] text-[18px] w-[36px]">60%</span>
        <svg className="ml-[28px] mr-[28px]" width="22" height="15" viewBox="0 0 22 15" fill="none" stroke="#444" strokeWidth="1.300"><rect x="1" y="1" width="20" height="13" rx="2" /><path d="M4 6V4H7M15 4H18V6M4 9V11H7M15 11H18V9" /></svg>
      </div>
    </div>
  );
}

function Slot({ children, dot, active }) {
  const box = active
    ? 'w-[56px] h-[58px] mx-[5px] bg-[#f5f6ef] rounded-[5px] shadow-[0_0_2px_rgba(0,0,0,0.18)]'
    : 'w-[66px] h-[71px]';
  return (
    <div className={`flex items-center justify-center relative shrink-0 ${box}`}>
      {children}
      {dot && <span className="absolute bottom-[6px] left-[30px] w-[6px] h-[6px] rounded-full bg-[#777]" />}
      {active && <span className="absolute bottom-[1px] left-[16px] w-[24px] h-[5px] rounded-full bg-[#0a6cd6]" />}
    </div>
  );
}

const Badge = () => (
  <span className="absolute left-[37px] top-[11px] w-[23px] h-[28px] rounded-full bg-[#2a82d8] text-white text-[13px] flex items-center justify-center">A</span>
);

function Taskbar() {
  return (
    <div className="h-[71px] bg-[#ebf2e2] flex items-center shrink-0 relative">
      <div className="ml-[30px] w-[36px] relative">
        <svg width="36" height="30" viewBox="0 0 36 30" fill="none" stroke="#8ca8c9" strokeWidth="4" strokeLinecap="round"><path d="M2 10H28M2 18H34M24 18C30 18 30 27 24 27" /></svg>
        <span className="absolute left-[17px] top-[-10px] w-[23px] h-[23px] rounded-full bg-[#c42b1c] text-white text-[15px] flex items-center justify-center">2</span>
      </div>
      <svg className="ml-[284px]" width="36" height="36" viewBox="0 0 36 36">
        <defs>
          <linearGradient id="win" x1="0" y1="0" x2="1" y2="1"><stop offset="0" stopColor="#4fd0fb" /><stop offset="1" stopColor="#0a74d6" /></linearGradient>
        </defs>
        <path d="M0 2C0 1 1 0 2 0H17V17H0ZM19 0H34C35 0 36 1 36 2V17H19ZM0 19H17V36H2C1 36 0 35 0 34ZM19 19H36V34C36 35 35 36 34 36H19Z" fill="url(#win)" />
      </svg>
      <div className="ml-[20px] w-[328px] h-[46px] rounded-full bg-[#f9faf6] border-2 border-[#dde3d5] flex items-center pl-[14px] text-[20px] text-[#555] relative">
        <svg width="26" height="26" viewBox="0 0 26 26" fill="none" stroke="#222" strokeWidth="2"><circle cx="11" cy="11" r="9" /><path d="M17 18L24 25" /></svg>
        <span className="ml-[12px]">Search</span>
        <svg className="absolute right-[8px] top-[2px]" width="62" height="40" viewBox="0 0 62 40">
          <circle cx="29" cy="14" r="10" fill="#f2b33d" />
          <path d="M1 16L12 9L18 13L24 10L18 22L12 19L4 23Z" fill="#4a2b73" />
          <path d="M45 1L49 14L52 12V24C54 30 60 33 62 36H2C14 34 30 34 38 26V14L41 15Z" fill="#4a2b73" />
        </svg>
      </div>
      <div className="ml-[5px] flex items-center">
        <Slot>
          <svg width="38" height="36" viewBox="0 0 38 36">
            <rect x="10" y="0" width="27" height="27" rx="2" fill="#eeeeee" />
            <rect x="0" y="13" width="27" height="22" rx="2" fill="#222" />
            <rect x="10" y="13" width="17" height="14" fill="#c4c4c4" />
          </svg>
        </Slot>
        <Slot>
          <svg width="36" height="36" viewBox="0 0 36 36">
            <path d="M0 2H14L17 5H36V35H0Z" fill="#fbd048" />
            <path d="M0 0H12L15 6H0Z" fill="#d89a18" />
            <rect x="5" y="22" width="26" height="13" rx="2" fill="#1676c9" />
            <rect x="11" y="26" width="14" height="2" fill="#0b3f78" />
          </svg>
        </Slot>
        <Slot>
          <svg width="38" height="26" viewBox="0 0 38 26"><rect width="38" height="26" rx="7" fill="#ff0033" /><path d="M15 7L26 13L15 19Z" fill="#fff" /></svg>
        </Slot>
        <Slot><CopilotLogo id="tc" size={38} /></Slot>
        <Slot>
          <div className="w-[36px] h-[36px] flex flex-col items-center overflow-hidden rounded-[1px] bg-gradient-to-b from-[#101018] via-[#3b1a6e] to-[#0b0b14]">
            <span className="text-[8px] font-bold leading-[12px] text-white mt-[1px] font-['Liberation_Serif',serif]">SONY</span>
            <span className="text-[20px] font-bold leading-[18px] text-[#f4b63a]">liv</span>
          </div>
        </Slot>
        <Slot>
          <svg width="36" height="36" viewBox="0 0 36 36">
            <defs>
              <linearGradient id="edge" x1="0" y1="0" x2="1" y2="1"><stop offset="0" stopColor="#2ed6b5" /><stop offset=".6" stopColor="#1a8fd6" /><stop offset="1" stopColor="#0c4fa8" /></linearGradient>
            </defs>
            <circle cx="18" cy="18" r="18" fill="url(#edge)" />
            <path d="M36 20C36 12 28 9 20 10C12 11 11 20 18 21C26 22 30 24 27 30C33 28 36 25 36 20Z" fill="#ebf2e2" />
            <path d="M18 36C8 34 6 22 12 14C10 24 16 33 27 32C25 35 22 36 18 36Z" fill="#0f5db5" />
          </svg>
        </Slot>
        <Slot dot><FaSpotify size={36} color="#1ed760" className="bg-[#111] rounded-full" /></Slot>
        <Slot dot>
          <div className="w-[36px] h-[36px] bg-[#1b1b1b] flex items-center justify-center"><FaGithub size={32} color="#fff" /></div>
          <Badge />
        </Slot>
        <Slot dot><FaWhatsapp size={38} color="#1f8a58" /></Slot>
        <Slot active>
          <svg width="36" height="36" viewBox="0 0 36 36">
            <rect width="36" height="36" fill="#0a78d4" />
            <rect x="20" y="0" width="16" height="36" fill="#e0a21c" />
            <rect x="29" y="0" width="7" height="36" fill="#8a6410" />
            <rect x="12" y="9" width="14" height="27" fill="#f2c83d" />
            <rect x="4" y="18" width="14" height="18" fill="#f7dd80" />
          </svg>
        </Slot>
        <Slot dot>
          <svg width="36" height="36" viewBox="0 0 36 36">
            <path d="M18 18L3 9A18 18 0 0 1 33 9Z" fill="#e5392f" />
            <path d="M18 18L3 9A18 18 0 0 0 15 36Z" fill="#2f9e50" />
            <path d="M18 18L33 9A18 18 0 0 1 15 36Z" fill="#f6c21c" />
            <circle cx="18" cy="18" r="9" fill="#fff" />
            <circle cx="18" cy="18" r="7" fill="#3a7fe8" />
          </svg>
          <Badge />
        </Slot>
      </div>
      <svg className="ml-[102px]" width="16" height="10" viewBox="0 0 16 10" fill="none" stroke="#222" strokeWidth="1.500"><path d="M1 9L8 2L15 9" /></svg>
      <div className="ml-[26px] w-[44px] text-center text-[18px] leading-[24px] text-[#222]">ENG<br />IN</div>
      <svg className="ml-[23px]" width="24" height="22" viewBox="0 0 24 22" fill="none" stroke="#222" strokeWidth="1.600"><path d="M1 7C8 0 16 0 23 7M5 11C9 7 15 7 19 11M8.500 15C10.500 13 13.500 13 15.500 15" /><circle cx="12" cy="19" r="1.500" fill="#222" /></svg>
      <svg className="ml-[12px]" width="24" height="22" viewBox="0 0 24 22" fill="none" stroke="#222" strokeWidth="1.400"><path d="M1 7H6L12 2V20L6 15H1Z" /><path d="M15 7C17 9 17 13 15 15M18 4C21 8 21 14 18 18" /></svg>
      <svg className="ml-[11px]" width="24" height="18" viewBox="0 0 24 18" fill="none" stroke="#222" strokeWidth="1.400"><rect x="1" y="1" width="19" height="16" rx="3" /><rect x="4" y="4" width="13" height="10" fill="#222" stroke="none" /><path d="M22 6V12" strokeWidth="2" /></svg>
      <div className="ml-auto mr-[30px] text-right text-[18px] leading-[25px] text-[#222]">14:48<br />26-05-2025</div>
    </div>
  );
}

export default function App() {
  return (
    <div className="w-[1920px] h-[1080px] flex flex-col overflow-hidden bg-[#f4f4f4] font-['Roboto',sans-serif]">
      <TitleBar />
      <MenuRow />
      <Ribbon />
      <div className="h-[717px] flex shrink-0">
        <Rail />
        <div className="w-[1318px] flex flex-col shrink-0">
          <div className="flex-1 flex min-h-0">
            <Canvas />
            <FiltersPane />
          </div>
          <TabsBar />
        </div>
        <VizPane />
        <DataPane />
      </div>
      <StatusBar />
      <Taskbar />
    </div>
  );
}
